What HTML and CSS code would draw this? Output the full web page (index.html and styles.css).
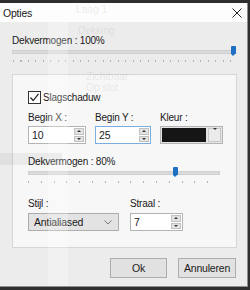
FILE: index.html
```html
<!DOCTYPE html>
<html lang="nl">
<head>
  <meta charset="UTF-8">
  <title>Opties</title>
  <link rel="stylesheet" href="styles.css">
</head>
<body>
  <div class="window">
    <div class="titlebar">
      <span>Opties</span>
      <svg class="close" width="10" height="10" viewBox="0 0 10 10">
        <path d="M0.5 0.5 L9.5 9.5 M9.5 0.5 L0.5 9.5" stroke="#222" stroke-width="1" fill="none"/>
      </svg>
    </div>

    <div class="content">
      <div class="label first">Dekvermogen : 100%</div>
      <div class="slider">
        <div class="track"></div>
        <div class="thumb" style="left: 219px"></div>
      </div>
      <div class="ticks wide"></div>

      <div class="group">
        <label class="check">
          <span class="box">
            <svg width="11" height="11" viewBox="0 0 11 11">
              <path d="M1.5 5.5 L4.2 8.5 L9.5 1.8" stroke="#222" stroke-width="1.2" fill="none"/>
            </svg>
          </span>
          Slagschaduw
        </label>

        <div class="row">
          <div class="field f1">
            <div class="label">Begin X :</div>
            <div class="spin w58">
              <span class="value">10</span>
              <span class="arrows"><i class="up"></i><i class="down"></i></span>
            </div>
          </div>
          <div class="field f2">
            <div class="label">Begin Y :</div>
            <div class="spin w56 focus">
              <span class="value">25</span>
              <span class="arrows"><i class="up"></i><i class="down"></i></span>
            </div>
          </div>
          <div class="field">
            <div class="label">Kleur :</div>
            <div class="colorpick">
              <span class="swatch"></span>
              <span class="drop"><i class="down"></i></span>
            </div>
          </div>
        </div>

        <div class="label opacity">Dekvermogen : 80%</div>
        <div class="slider inner">
          <div class="track"></div>
          <div class="thumb" style="left: 145px"></div>
        </div>
        <div class="ticks narrow"></div>

        <div class="row bottom">
          <div class="field f3">
            <div class="label">Stijl :</div>
            <div class="select">
              <span>Antialiased</span>
              <svg width="8" height="5" viewBox="0 0 8 5">
                <path d="M0.5 0.5 L4 4 L7.5 0.5" stroke="#777" stroke-width="1" fill="none"/>
              </svg>
            </div>
          </div>
          <div class="field">
            <div class="label">Straal :</div>
            <div class="spin w53">
              <span class="value">7</span>
              <span class="arrows"><i class="up"></i><i class="down"></i></span>
            </div>
          </div>
        </div>
      </div>

      <div class="buttons">
        <button class="btn ok">Ok</button>
        <button class="btn">Annuleren</button>
      </div>
    </div>

    <!-- the layer panel behind shows faintly through the dialog -->
    <div class="ghost">
      <span class="g-stripe"></span>
      <span class="g-band"></span>
      <span class="g-text" style="left: 76px; top: 0px">Laag 1</span>
      <span class="g-text" style="left: 78px; top: 21px">Dekking</span>
      <span class="g-text" style="left: 86px; top: 67px">Zichtbaar</span>
      <span class="g-text" style="left: 86px; top: 78px">Op slot</span>
    </div>
  </div>
</body>
</html>
```

FILE: styles.css
```css
* {
  box-sizing: border-box;
}

body {
  margin: 0;
  background: #2f2f2f;
  font-family: "Liberation Sans", Arial, sans-serif;
  font-size: 10px;
  letter-spacing: -0.2px;
  color: #1a1a1a;
  width: 250px;
  height: 290px;
  overflow: hidden;
}

.window {
  position: relative;
  margin-top: 3px;
  width: 248px;
  height: 284px;
  background: #ececec;
  border-right: 1px solid #8e8e8e;
  border-bottom: 1px solid #8e8e8e;
  overflow: hidden;
}

.titlebar {
  height: 19px;
  background: #fdfdfd;
  display: flex;
  align-items: center;
  justify-content: space-between;
  padding: 0 5px 0 3px;
  font-size: 10.5px;
}

.content {
  padding: 0 11px 0 12px;
}

.label {
  line-height: 14px;
  white-space: nowrap;
}

.label.first {
  margin-top: 12px;
}

.slider {
  position: relative;
  height: 12px;
  margin-top: -2px;
}

.track {
  position: absolute;
  left: 0;
  right: 0;
  top: 4px;
  height: 4px;
  background: #dadada;
  border: 1px solid #d0d0d0;
}

.thumb {
  position: absolute;
  top: 0;
  width: 5px;
  height: 8px;
  background: #1f6fc4;
  border-radius: 1px 1px 0 0;
}

.thumb::after {
  content: "";
  position: absolute;
  left: 0;
  top: 8px;
  border-left: 2.5px solid transparent;
  border-right: 2.5px solid transparent;
  border-top: 2px solid #1f6fc4;
}

.ticks {
  height: 2px;
  margin-top: 2px;
}

.ticks.wide {
  margin-left: 1px;
  background: repeating-linear-gradient(90deg, #b3b3b3 0 1px, transparent 1px 7.5px);
}

.ticks.narrow {
  width: 192px;
  background: repeating-linear-gradient(90deg, #b3b3b3 0 1px, transparent 1px 12.8px);
}

.group {
  margin-top: 12px;
  width: 225px;
  height: 174px;
  padding: 0 0 0 15px;
  background: #f7f7f7;
  border: 1px solid #d6d6d6;
}

.check {
  display: flex;
  align-items: center;
  gap: 2px;
  margin-top: 16px;
  line-height: 13px;
  height: 13px;
}

.box {
  width: 13px;
  height: 13px;
  border: 1px solid #333;
  background: #fff;
  display: inline-flex;
}

.row {
  display: flex;
  margin-top: 7px;
}

.row.bottom {
  margin-top: 14px;
}

.f1 { width: 67px; }
.f2 { width: 65px; }
.f3 { width: 102px; }

.field .label {
  margin-bottom: 1px;
}

.bottom .field .label {
  margin-bottom: 2px;
}

.spin {
  height: 18px;
  display: flex;
  border: 1px solid #b4b4b4;
  background: #fff;
}

.spin.focus {
  border-color: #7aaee0;
}

.w58 { width: 58px; }
.w56 { width: 56px; }
.w53 { width: 53px; }

.value {
  flex: 1;
  padding-left: 3px;
  line-height: 16px;
  font-size: 10.5px;
}

.arrows {
  width: 10px;
  margin: 1px 1px 1px 0;
  display: flex;
  flex-direction: column;
  gap: 1px;
}

.arrows i {
  flex: 1;
  background: #e3e3e3;
  border: 1px solid #c2c2c2;
  display: flex;
  align-items: center;
  justify-content: center;
}

.up::after,
.down::after {
  content: "";
  border-left: 2px solid transparent;
  border-right: 2px solid transparent;
}

.up::after {
  border-bottom: 2px solid #333;
}

.down::after {
  border-top: 2px solid #333;
}

.colorpick {
  width: 63px;
  height: 18px;
  display: flex;
  gap: 2px;
  padding: 1px;
  border: 1px solid #b4b4b4;
  background: #e4e4e4;
}

.swatch {
  width: 44px;
  background: #151515;
}

.drop {
  flex: 1;
  display: flex;
  align-items: center;
  justify-content: center;
  background: #ebebeb;
  border: 1px solid #c8c8c8;
}

.opacity {
  margin-top: 11px;
}

.slider.inner {
  width: 192px;
}

.select {
  width: 91px;
  height: 18px;
  padding: 0 6px 0 5px;
  display: flex;
  align-items: center;
  justify-content: space-between;
  background: #e3e3e3;
  border: 1px solid #adadad;
  font-size: 10.5px;
}

.buttons {
  display: flex;
  justify-content: flex-end;
  gap: 11px;
  margin-top: 10px;
}

.btn {
  width: 58px;
  height: 20px;
  padding: 0;
  font: inherit;
  font-size: 10.5px;
  letter-spacing: -0.2px;
  color: #1a1a1a;
  background: #e1e1e1;
  border: 1px solid #adadad;
}

.btn.ok {
  width: 57px;
}

.ghost {
  position: absolute;
  inset: 0;
  pointer-events: none;
}

.g-text {
  position: absolute;
  color: rgba(120, 120, 120, 0.15);
  font-size: 10.5px;
  line-height: 12px;
}

.g-stripe {
  position: absolute;
  left: 48px;
  top: 0;
  width: 20px;
  height: 100%;
  background: rgba(255, 255, 255, 0.25);
}

.g-band {
  position: absolute;
  left: 0;
  top: 150px;
  width: 62px;
  height: 12px;
  background: rgba(0, 0, 0, 0.05);
}
```
